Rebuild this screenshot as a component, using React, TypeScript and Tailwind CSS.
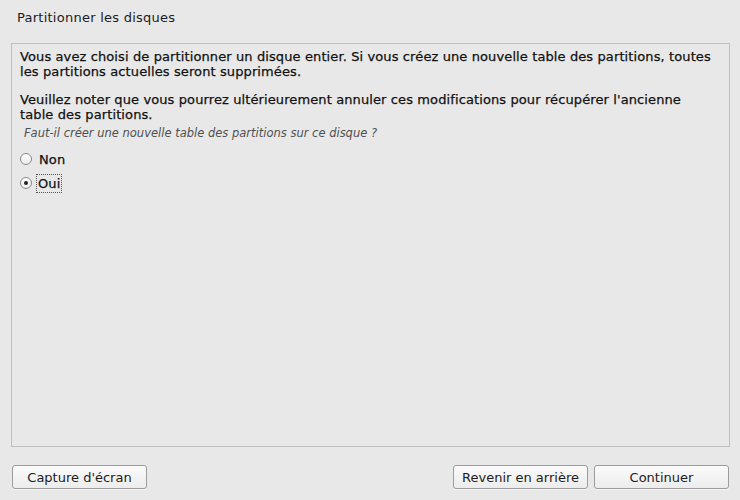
import React from 'react';

const Radio: React.FC<{ checked?: boolean; label: string; focused?: boolean }> = ({ checked, label, focused }) => (
  <div className="flex items-center h-[24px]">
    <span className="w-[12px] h-[12px] rounded-full border border-[#8a8a8a] bg-gradient-to-b from-[#ffffff] to-[#ececec] flex items-center justify-center">
      {checked && <span className="w-[4px] h-[4px] rounded-full bg-[#222]" />}
    </span>
    <span
      className={
        focused
          ? 'ml-[4px] px-[1px] border border-dotted border-[#555] leading-[17px] tracking-[0.1px] [-webkit-text-stroke:0.25px_#111]'
          : 'ml-[5px] px-[1px] border border-transparent leading-[17px] tracking-[0.1px] [-webkit-text-stroke:0.25px_#111]'
      }
    >
      {label}
    </span>
  </div>
);

const Button: React.FC<{ label: string }> = ({ label }) => (
  <button className="w-[135px] h-[24px] rounded-[3px] border border-[#9c9c9c] bg-gradient-to-b from-[#fbfbfb] to-[#ececec] text-[13px] text-[#1c1c1c] leading-none shadow-[0_1px_0_#f6f6f6]">
    {label}
  </button>
);

export default function App() {
  return (
    <div
      className="w-[740px] h-[500px] bg-[#e8e8e8] flex flex-col text-[#1c1c1c]"
      style={{ fontFamily: '"DejaVu Sans", sans-serif' }}
    >
      <div className="pl-[17px] pt-[10px] h-[43px] text-[13px] tracking-[0.25px] leading-[16px]">
        Partitionner les disques
      </div>

      <div className="mx-[11px] mr-[10px] h-[404px] border border-[#bfbfbf] px-[8px] pt-[6px]">
        <div className="max-w-[694px] text-[13px] tracking-[0.11px] leading-[14.5px] text-[#111] [-webkit-text-stroke:0.25px_#111]">
          <p>
            Vous avez choisi de partitionner un disque entier. Si vous créez une nouvelle table des partitions, toutes
            les partitions actuelles seront supprimées.
          </p>
          <p className="mt-[14px]">
            Veuillez noter que vous pourrez ultérieurement annuler ces modifications pour récupérer l'ancienne table
            des partitions.
          </p>
        </div>
        <div className="mt-[4px] pl-[4px] text-[11.5px] italic text-[#505050] leading-[14px]">
          Faut-il créer une nouvelle table des partitions sur ce disque ?
        </div>
        <div className="mt-[7px] text-[13px] text-[#111]">
          <Radio label="Non" />
          <Radio label="Oui" checked focused />
        </div>
      </div>

      <div className="flex items-center mt-[18px] pl-[12px] pr-[11px]">
        <Button label="Capture d'écran" />
        <div className="flex-1" />
        <div className="flex gap-[6px]">
          <Button label="Revenir en arrière" />
          <Button label="Continuer" />
        </div>
      </div>
    </div>
  );
}
